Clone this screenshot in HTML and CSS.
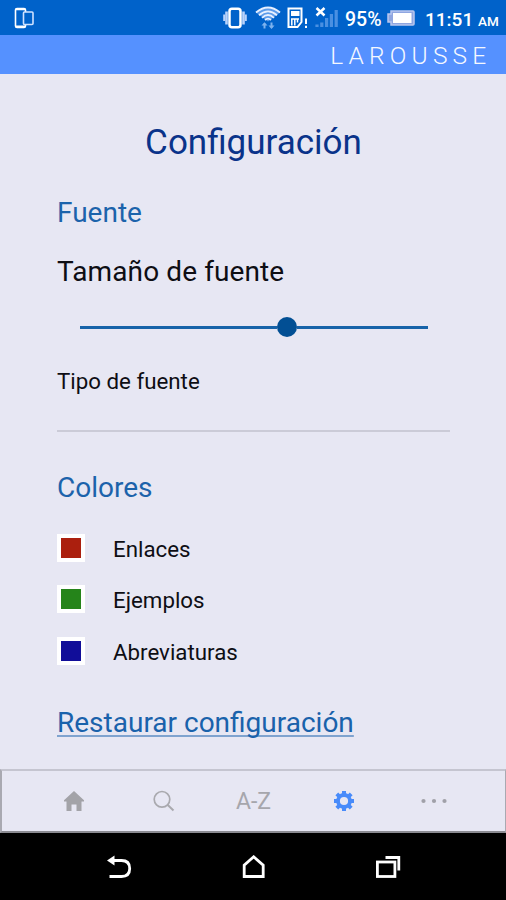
FILE: index.html
```html
<!DOCTYPE html>
<html lang="es">

<head>
    <meta charset="UTF-8">
    <meta name="viewport" content="width=device-width, initial-scale=1.0">
    <title>Configuración</title>
    <link rel="stylesheet" href="styles.css">
</head>
<body>
    <div class="status">
        <svg class="phone" width="20" height="22" viewBox="0 0 20 22" fill="none" stroke="#fff">
            <rect x="1.500" y="1.500" width="10" height="19" rx="1.500" stroke-width="1.600"/>
            <path d="M2 2.200H11M2 19.700H11" stroke-width="2.200"/>
            <rect x="9.500" y="5" width="9.500" height="12.500" rx="1" stroke-width="1.600" fill="#0062ca" stroke="#cfe2ff"/>
        </svg>
        <svg class="vibrate" width="24" height="22" viewBox="0 0 24 22" fill="none" stroke="#b9d3fb">
            <rect x="6.500" y="1.800" width="11" height="18.500" rx="2.500" stroke-width="2.500" stroke="#fff"/>
            <path d="M3.500 4.500V17.500M20.500 4.500V17.500" stroke-width="2.600"/>
            <path d="M1.200 7.500V14M22.800 7.500V14" stroke-width="2"/>
        </svg>
        <svg class="wifi" width="26" height="24" viewBox="0 0 26 24" fill="none" stroke="#e8f0ff" stroke-width="1.800">
            <path d="M1 6.500L13 15.500L25 6.500Q13-3.500 1 6.500Z" fill="#5c9bea" stroke="none"/>
            <path d="M1 6.500Q13-3.500 25 6.500M4 9.300Q13 1.500 22 9.300M7 11.800Q13 6.300 19 11.800M10 14Q13 11.200 16 14"/>
            <path d="M9.500 22.500V17.500M16.500 16.500V21.500" stroke="#7db2ee" stroke-width="2"/>
            <path d="M6.500 19.500L9.500 16.200L12.500 19.500ZM13.500 19.500H19.500L16.500 23Z" fill="#7db2ee" stroke="none"/>
        </svg>
        <svg class="sim" width="21" height="22" viewBox="0 0 21 22" fill="none" stroke="#fff">
            <path d="M1.500 1.500H14.500V15L10.500 20H1.500Z" stroke-width="2"/>
            <rect x="4" y="4" width="8.500" height="5" fill="#fff" stroke="none"/>
            <path d="M4.800 11.500V18.500M7.800 11.500V18.500M10.500 11.500V15.500M4 12H12" stroke-width="1.500"/>
            <path d="M19 11.500V17M19 18.800V21" stroke-width="2"/>
        </svg>
        <svg class="signal" width="24" height="22" viewBox="0 0 24 22" fill="none">
            <path d="M2 20V17.500M6.800 20V15.500M11.600 20V11M16.400 20V7M21.200 20V3" stroke="#4a90e2" stroke-width="3.200"/>
            <path d="M1.500 1L9.500 8.500M9.500 1L1.500 8.500" stroke="#fff" stroke-width="2.500"/>
        </svg>
        <span class="percent">95%</span>
        <svg class="battery" width="28" height="16" viewBox="0 0 28 16">
            <path d="M4 1H26Q27 1 27 2V14Q27 15 26 15H4V12H1V4H4Z" fill="#8fa6e0" stroke="#b9c6ee" stroke-width="1.500"/>
            <rect x="6" y="3" width="18.500" height="10" fill="#fff"/>
        </svg>
        <span class="time">11:51</span>
        <span class="ampm">AM</span>
    </div>
    <div class="brand">LAROUSSE</div>
    <div class="main">
        <h1 class="title">Configuración</h1>
        <h2 class="group">Fuente</h2>
        <p class="size">Tamaño de fuente</p>
        <div class="slider">
            <div class="line"></div>
            <div class="dot"></div>
            <div class="line rest"></div>
        </div>
        <p class="type">Tipo de fuente</p>
        <h2 class="group colors">Colores</h2>
        <ul class="list">
            <li><span class="swatch red"></span><span>Enlaces</span></li>
            <li><span class="swatch green"></span><span>Ejemplos</span></li>
            <li><span class="swatch blue"></span><span>Abreviaturas</span></li>
        </ul>
        <a class="reset">Restaurar configuración</a>
    </div>
    <div class="tabs">
        <div class="tab">
            <svg width="20" height="20" viewBox="0 0 20 20" fill="#a3a3a8">
                <path d="M10 0L20 9.300V10.500H17.500V20H12.500V13.500H7.500V20H2.500V10.500H0V9.300Z"/>
            </svg>
        </div>
        <div class="tab">
            <svg width="22" height="22" viewBox="0 0 22 22" fill="none" stroke="#a9a9ae" stroke-width="1.700">
                <circle cx="9" cy="9.300" r="7.800"/>
                <path d="M14.500 14.800L20.500 20.500" stroke-width="2"/>
            </svg>
        </div>
        <div class="tab az">A-Z</div>
        <div class="tab">
            <svg width="20" height="20" viewBox="-10 -10 20 20" fill="none" stroke="#488bfa">
                <circle r="6" stroke-width="3.800"/>
                <path d="M0-6V-10M0 6V10M-6 0H-10M6 0H10M4.700-4.700L7.200-7.200M-4.700 4.700L-7.200 7.200M-4.700-4.700L-7.200-7.200M4.700 4.700L7.200 7.200" stroke-width="4"/>
            </svg>
        </div>
        <div class="tab">
            <svg width="26" height="6" viewBox="0 0 26 6" fill="#a0a0a8">
                <circle cx="2.500" cy="3" r="2.100"/>
                <circle cx="13" cy="3" r="2.100"/>
                <circle cx="23.500" cy="3" r="2.100"/>
            </svg>
        </div>
    </div>
    <div class="keys">
        <svg width="26" height="24" viewBox="0 0 26 24" fill="none" stroke="#fff" stroke-width="2.800">
            <path d="M6 5.500H14.500Q22.700 5.500 22.700 13.500T14.500 21.500H2.500"/>
            <path d="M0 5.500L7.500 .5V10.500Z" fill="#fff" stroke="none"/>
        </svg>
        <svg width="24" height="24" viewBox="0 0 24 24" fill="none" stroke="#fff" stroke-width="2.800">
            <path d="M2.200 21.500V10.200L11.700 1.800L21.200 10.200V21.500Z"/>
        </svg>
        <svg width="26" height="24" viewBox="0 0 26 24" fill="none" stroke="#fff" stroke-width="2.800">
            <rect x="2.400" y="7" width="17.500" height="14.500"/>
            <path d="M10.500 2.500H23.800V15.500"/>
        </svg>
    </div>
</body>
</html>
```

FILE: styles.css
```css
body {
    margin: 0;
    width: 506px;
    height: 900px;
    overflow: hidden;
    font-family: Roboto, sans-serif;
    background: #e7e7f3;
    color: #0e0e14;
}
h1, h2, p, ul {
    margin: 0;
    padding: 0;
    font-weight: normal;
}
svg {
    display: block;
    flex: none;
}
.status {
    display: flex;
    align-items: flex-start;
    box-sizing: border-box;
    height: 35px;
    padding: 7px 0 0 14px;
    background: #0062ca;
    color: #fff;
    white-space: nowrap;
}
.vibrate {
    margin-left: 189px;
}
.wifi {
    margin: -1px 0 0 8px;
}
.sim {
    margin-left: 6px;
}
.signal {
    margin-left: 7px;
}
.percent {
    width: 38px;
    margin-left: 6px;
    font-size: 19.5px;
    font-weight: 500;
    line-height: 25px;
}
.battery {
    margin: 3px 0 0 4px;
}
.time {
    width: 50px;
    margin-left: 10px;
    font-size: 19px;
    font-weight: 500;
    line-height: 25px;
}
.ampm {
    margin-left: 3px;
    font-size: 13.5px;
    font-weight: 500;
    line-height: 29px;
}
.brand {
    box-sizing: border-box;
    height: 39px;
    padding-right: 14.5px;
    background: #5591ff;
    color: #f4f8ff;
    font-size: 24.5px;
    font-weight: 300;
    line-height: 42px;
    letter-spacing: 5.2px;
    text-align: right;
}
.main {
    box-sizing: border-box;
    height: 695px;
    padding: 47px 56px 0 57px;
}
.title {
    color: #0a338a;
    font-size: 35px;
    line-height: 44px;
    text-align: center;
}
.group {
    margin-top: 30px;
    color: #1c63ab;
    font-size: 28px;
    line-height: 36px;
}
.size {
    margin-top: 23px;
    font-size: 28px;
    line-height: 36px;
    letter-spacing: .1px;
}
.slider {
    display: flex;
    align-items: center;
    height: 20px;
    margin: 27px 22.5px 29px;
}
.line {
    width: 197px;
    height: 3px;
    background: #1763a9;
}
.dot {
    width: 20px;
    height: 20px;
    border-radius: 50%;
    background: #024f94;
}
.rest {
    width: 131px;
}
.type {
    height: 64px;
    border-bottom: 2px solid #cbcbd7;
    font-size: 22.3px;
    line-height: 30px;
}
.colors {
    margin-top: 38px;
}
.list {
    display: grid;
    gap: 23.7px;
    margin-top: 27.5px;
    list-style: none;
    font-size: 22.3px;
}
.list li {
    display: flex;
    height: 28px;
    line-height: 30px;
}
.swatch {
    box-sizing: border-box;
    width: 28px;
    height: 28px;
    margin-right: 28px;
    border: 4px solid #fff;
}
.red {
    background: #ab1f0e;
}
.green {
    background: #25841a;
}
.blue {
    background: #110d99;
}
.reset {
    display: inline-block;
    margin-top: 40px;
    color: #1a62ab;
    font-size: 28px;
    line-height: 36px;
    text-decoration: underline;
    text-decoration-color: #7fa3cf;
    text-decoration-thickness: 2px;
    text-decoration-skip-ink: none;
    text-underline-offset: 3px;
}
.tabs {
    display: flex;
    justify-content: center;
    align-items: center;
    box-sizing: border-box;
    height: 64px;
    border: 2px solid #a9a9b1;
    border-top-color: #c5c5d0;
    border-right-width: 1px;
    border-bottom-color: #8b8b92;
}
.tab {
    display: flex;
    justify-content: center;
    width: 90px;
}
.az {
    color: #a6a6ac;
    font-size: 23px;
    line-height: 28px;
    padding-top: 1px;
}
.keys {
    display: flex;
    justify-content: space-between;
    box-sizing: border-box;
    height: 67px;
    padding: 22px 105.5px 0 107px;
    background: #000;
}
```
